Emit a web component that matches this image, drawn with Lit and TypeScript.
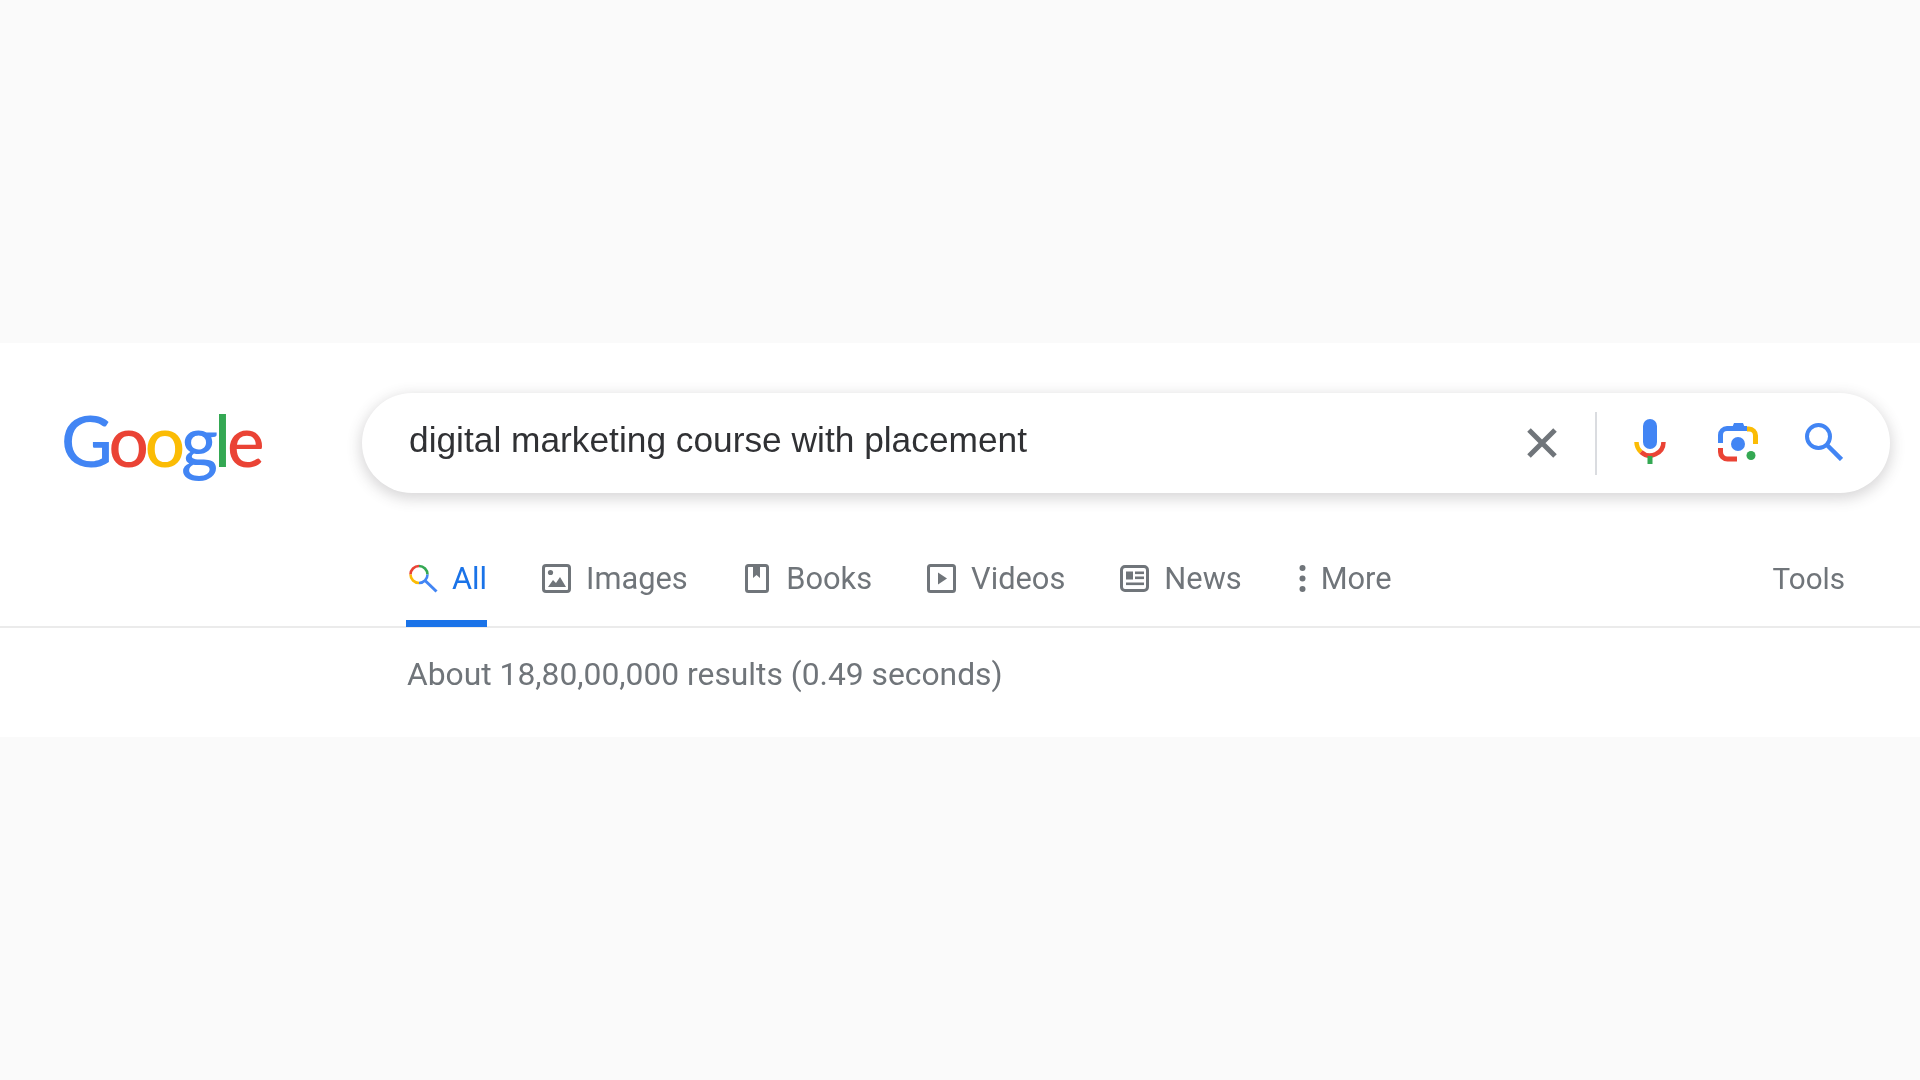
import { LitElement, css, html, svg } from 'lit'
import { customElement } from 'lit/decorators.js'

const tabIcons: Record<string, unknown> = {
  all: html`<svg class="tab-icon" viewBox="0 0 29 28" fill="none" stroke-width="2.6">
    ${svg`<path d="M1.5 10A8.5 8.5 0 0 1 10 1.5" stroke="#ea4335"/>
    <path d="M10 1.5A8.5 8.5 0 0 1 18.5 10" stroke="#34a853"/>
    <path d="M1.5 10A8.5 8.5 0 0 0 10 18.5" stroke="#fbbc05"/>
    <path d="M10 18.5A8.5 8.5 0 0 0 18.5 10" stroke="#4285f4"/>
    <path d="M16 16L27.5 27" stroke="#4285f4" stroke-width="3"/>`}
  </svg>`,
  images: html`<svg class="tab-icon" viewBox="0 0 29 29" fill="none">
    ${svg`<rect x="1.5" y="1.5" width="26" height="26" rx="2.5" stroke="#70757a" stroke-width="3"/>
    <circle cx="8.5" cy="8.5" r="2.6" fill="#70757a"/>
    <path d="M6 23L11 16L14 19L18 13L24 23Z" fill="#70757a"/>`}
  </svg>`,
  books: html`<svg class="tab-icon book" viewBox="0 0 24 29" fill="none">
    ${svg`<rect x="1.5" y="1.5" width="21" height="26" rx="2" stroke="#70757a" stroke-width="3"/>
    <path d="M8 2H15V14L11.5 11L8 14Z" fill="#70757a"/>`}
  </svg>`,
  videos: html`<svg class="tab-icon" viewBox="0 0 29 29" fill="none">
    ${svg`<rect x="1.5" y="1.5" width="26" height="26" rx="2" stroke="#70757a" stroke-width="3"/>
    <path d="M11 8.5L20 14.5L11 20.5Z" fill="#70757a"/>`}
  </svg>`,
  news: html`<svg class="tab-icon" viewBox="0 0 29 29" fill="none">
    ${svg`<rect x="1.5" y="2.5" width="26" height="24" rx="3.5" stroke="#70757a" stroke-width="3"/>
    <rect x="6" y="7.5" width="7" height="8" fill="#70757a"/>
    <rect x="15" y="7.5" width="9" height="2.6" fill="#70757a"/>
    <rect x="15" y="12.5" width="9" height="2.6" fill="#70757a"/>
    <rect x="6" y="18.5" width="18" height="2.6" fill="#70757a"/>`}
  </svg>`,
  more: html`<svg class="tab-icon dots" viewBox="0 0 7 29" fill="#70757a">
    ${svg`<circle cx="3.5" cy="4" r="3"/><circle cx="3.5" cy="14.5" r="3"/><circle cx="3.5" cy="25" r="3"/>`}
  </svg>`
}

const tabs = [
  { id: 'all', label: 'All' },
  { id: 'images', label: 'Images' },
  { id: 'books', label: 'Books' },
  { id: 'videos', label: 'Videos' },
  { id: 'news', label: 'News' },
  { id: 'more', label: 'More' }
]

@customElement('app-root')
export class AppRoot extends LitElement {
  static styles = css`
    :host {
      display: block;
      min-height: 1080px;
      background: #fafafa;
      padding-top: 343px;
      box-sizing: border-box;
      font-family: Roboto, "Liberation Sans", sans-serif;
    }

    .band {
      height: 394px;
      background: #fff;
      padding-top: 50px;
      box-sizing: border-box;
    }

    .header {
      display: flex;
      align-items: center;
      padding-left: 61px;
    }

    .logo {
      width: 301px;
      margin-top: -6px;
      font-family: Lato, sans-serif;
      font-size: 71px;
      line-height: 100px;
      letter-spacing: -4px;
      font-weight: 500;
      white-space: nowrap;
      filter: blur(0.6px);
    }

    .logo .blue { color: #4285f4; }
    .logo .red { color: #ea4335; }
    .logo .yellow { color: #fbbc05; }
    .logo .green { color: #34a853; }

    .search {
      width: 1528px;
      height: 100px;
      box-sizing: border-box;
      display: flex;
      align-items: center;
      padding: 0 47px;
      border-radius: 50px;
      background: #fff;
      box-shadow: 0 4px 14px 2px rgba(64, 60, 67, 0.2);
    }

    .query {
      flex: 1;
      font-family: "Liberation Sans", Arial, sans-serif;
      font-size: 35.3px;
      color: #303134;
      margin-top: -6px;
      filter: blur(0.5px);
    }

    .search svg { display: block; flex: none; filter: blur(0.4px); }
    .clear { width: 30px; height: 30px; }
    .divider { width: 2px; height: 63px; margin: 0 37px 0 38px; background: #dadce0; }
    .mic { width: 32px; height: 45px; margin-top: -3px; }
    .lens { width: 40px; height: 39px; margin: -1px 0 0 52px; }
    .glass { width: 38px; height: 38px; margin: -3px 0 0 47px; }

    .tabs {
      display: flex;
      align-items: flex-start;
      height: 84px;
      margin-top: 49px;
      padding: 0 75px 0 406px;
      border-bottom: 2px solid #ebebeb;
      font-size: 30.8px;
      color: #70757a;
    }

    .tab {
      display: flex;
      align-items: center;
      gap: 15px;
      margin-right: 55px;
      padding-bottom: 12px;
      box-sizing: border-box;
      height: 85px;
    }

    .tab span { filter: blur(0.5px); }

    .tab.active {
      gap: 14px;
      color: #1a73e8;
      border-bottom: 7px solid #1a73e8;
      padding: 0 0 5px 3px;
    }

    .tab-icon { display: block; width: 29px; height: 29px; flex: none; filter: blur(0.4px); }
    .tab-icon.book { width: 24px; margin: 0 2.5px 0 2px; }
    .tab-icon.dots { width: 7px; margin-left: 2px; }

    .tools {
      margin-left: auto;
      height: 85px;
      padding-bottom: 12px;
      box-sizing: border-box;
      display: flex;
      align-items: center;
      font-size: 29.6px;
      filter: blur(0.5px);
    }

    .stats {
      padding: 26px 0 0 407px;
      font-size: 31.8px;
      line-height: 40px;
      color: #70757a;
      filter: blur(0.5px);
    }
  `

  render () {
    return html`
      <div class="band">
        <div class="header">
          <div class="logo"><span class="blue">G</span><span class="red">o</span><span class="yellow">o</span><span class="blue">g</span><span class="green">l</span><span class="red">e</span></div>
          <div class="search">
            <div class="query">digital marketing course with placement</div>
            <svg class="clear" viewBox="0 0 30 30" fill="none" stroke="#70757a" stroke-width="5">
              <path d="M2 2L28 28M28 2L2 28"/>
            </svg>
            <div class="divider"></div>
            <svg class="mic" viewBox="0 0 32 45" fill="none">
              <rect x="9" y="0" width="14" height="30" rx="7" fill="#4285f4"/>
              <path d="M2.5 23A13.5 13.5 0 0 0 7 33" stroke="#fbbc05" stroke-width="4.5"/>
              <path d="M7 33A13.5 13.5 0 0 0 29.5 23" stroke="#ea4335" stroke-width="4.5"/>
              <rect x="13.5" y="37" width="5" height="8" fill="#34a853"/>
            </svg>
            <svg class="lens" viewBox="0 0 40 39" fill="none" stroke-width="5">
              <path d="M14 5L16 0H25L27 5Z" fill="#4285f4"/>
              <path d="M2.5 20V12A6.5 6.5 0 0 1 9 5.5H29" stroke="#4285f4"/>
              <path d="M29 6H31A6.5 6.5 0 0 1 37.5 12.5V21" stroke="#fbbc05"/>
              <path d="M2.5 25V29A7 7 0 0 0 9.5 36H19" stroke="#ea4335"/>
              <circle cx="20" cy="21" r="7" fill="#4285f4"/>
              <circle cx="33" cy="32.5" r="4.5" fill="#34a853"/>
            </svg>
            <svg class="glass" viewBox="0 0 38 38" fill="none" stroke="#4285f4">
              <circle cx="13.5" cy="13.5" r="11.5" stroke-width="4"/>
              <path d="M22 22L36.5 36.5" stroke-width="4.5"/>
            </svg>
          </div>
        </div>
        <div class="tabs">
          ${tabs.map(tab => html`
            <div class="tab ${tab.id === 'all' ? 'active' : ''}">
              ${tabIcons[tab.id]}
              <span>${tab.label}</span>
            </div>
          `)}
          <div class="tools">Tools</div>
        </div>
        <div class="stats">About 18,80,00,000 results (0.49 seconds)</div>
      </div>
    `
  }
}
